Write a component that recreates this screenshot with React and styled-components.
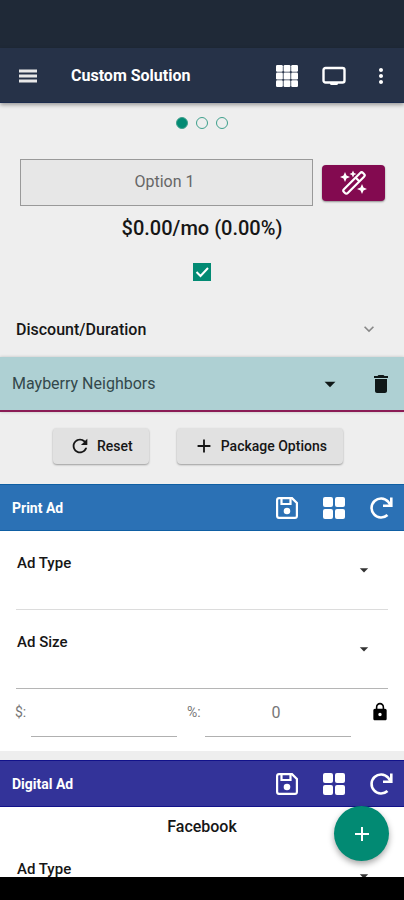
import { useState } from "react";
import styled, { createGlobalStyle } from "styled-components";
import {
    MdAdd,
    MdArrowDropDown,
    MdDelete,
    MdExpandMore,
    MdLock,
    MdMoreVert,
    MdRefresh,
} from "react-icons/md";

const GlobalStyle = createGlobalStyle`
    *{
        box-sizing: border-box;
    }
    body{
        margin: 0;
        background-color: #eeeeee;
        color: #161616;
        font-family: Roboto, "Liberation Sans", sans-serif;
    }
    button, input, select{
        font-family: inherit;
        color: inherit;
        margin: 0;
        padding: 0;
    }
`;

function MenuIcon(){
    return(
        <svg width="20" height="14" viewBox="0 0 20 14" fill="#e8e8e8">
            <rect x="1" y="0.5" width="18" height="3"/>
            <rect x="1" y="5.5" width="18" height="3"/>
            <rect x="1" y="10.5" width="18" height="3"/>
        </svg>
    );
}

function AppsIcon(){
    return(
        <svg width="22" height="22" viewBox="0 0 22 22" fill="currentColor">
            {[0, 7.6, 15.2].map((y) =>
                [0, 7.6, 15.2].map((x) => (
                    <rect key={`${x}-${y}`} x={x} y={y} width="6.8" height="6.8" rx="1.2"/>
                ))
            )}
        </svg>
    );
}

function MonitorIcon(){
    return(
        <svg width="24" height="20" viewBox="0 0 24 20">
            <rect x="1.5" y="2" width="21" height="14.5" rx="2" fill="none" stroke="currentColor" strokeWidth="2.4"/>
            <path d="M8 16h8v1.5a1.5 1.5 0 0 1-1.5 1.5h-5A1.5 1.5 0 0 1 8 17.5z" fill="currentColor"/>
        </svg>
    );
}

function WandIcon(){
    return(
        <svg width="28" height="26" viewBox="0 0 28 26">
            <g transform="rotate(-45 14 13)" fill="none" stroke="currentColor" strokeWidth="2.2">
                <rect x="0.5" y="10.3" width="27" height="5.4" rx="2"/>
                <path d="M19 10.5v5"/>
            </g>
            <g fill="currentColor">
                <path d="M5 2l1.5 3.5L10 7 6.500 8.500 5 12 3.500 8.500 0 7l3.500-1.500z"/>
                <path d="M13 0.500l1.100 2.400L16.500 4l-2.400 1.100L13 7.500l-1.100-2.400L9.500 4l2.400-1.100z"/>
                <path d="M22 14l1.500 3.500L27 19l-3.500 1.500L22 24l-1.500-3.500L17 19l3.500-1.500z"/>
            </g>
        </svg>
    );
}

function SaveIcon(){
    return(
        <svg width="22" height="22" viewBox="0 0 22 22" fill="none" stroke="currentColor" strokeWidth="2.2">
            <path d="M3 1.100h13l4.900 4.900v13a2 2 0 0 1-2 1.900H3a2 2 0 0 1-1.900-1.900V3A2 2 0 0 1 3 1.100z"/>
            <path d="M5.500 1.500V7h9V1.500"/>
            <circle cx="11" cy="14" r="3.300" fill="currentColor" stroke="none"/>
        </svg>
    );
}

function BlocksIcon(){
    return(
        <svg width="22" height="22" viewBox="0 0 22 22" fill="currentColor">
            <rect x="0" y="0" width="10" height="10" rx="2"/>
            <rect x="12" y="0" width="10" height="10" rx="2"/>
            <rect x="0" y="12" width="10" height="10" rx="2"/>
            <rect x="12" y="12" width="10" height="10" rx="2"/>
        </svg>
    );
}

function ReloadIcon(){
    return(
        <svg width="24" height="24" viewBox="0 0 24 24" fill="none" stroke="currentColor" strokeWidth="2.6">
            <path d="M18.500 19A9.500 9.500 0 1 1 19 5.500L21.500 9"/>
            <path d="M14 9.800h8.300V1.500"/>
        </svg>
    );
}

function AdHeader({ title, color, edge }){
    return(
        <SectionBar $color={color} $edge={edge}>
            <h2>{title}</h2>
            <IconButton aria-label={`Save ${title}`}><SaveIcon/></IconButton>
            <IconButton aria-label={`${title} layout`}><BlocksIcon/></IconButton>
            <IconButton aria-label={`Reset ${title}`}><ReloadIcon/></IconButton>
        </SectionBar>
    );
}

function AdField({ id, label, strong }){
    return(
        <Field $strong={strong}>
            <label htmlFor={id}>{label}</label>
            <select id={id} defaultValue="">
                <option value=""></option>
            </select>
            <MdArrowDropDown size={20}/>
        </Field>
    );
}

export default function App(){
    const [included, setIncluded] = useState(true);
    const [page, setPage] = useState(0);

    return(
        <Screen>
            <GlobalStyle/>
            <StatusBar/>
            <Toolbar>
                <IconButton $width={56} aria-label="Menu"><MenuIcon/></IconButton>
                <h1>Custom Solution</h1>
                <IconButton aria-label="Apps"><AppsIcon/></IconButton>
                <IconButton aria-label="Present"><MonitorIcon/></IconButton>
                <IconButton aria-label="More"><MdMoreVert size={24}/></IconButton>
            </Toolbar>

            <Main>
                <Dots>
                    {[0, 1, 2].map((n) => (
                        <Dot key={n} $active={n === page} aria-label={`Option ${n + 1}`} onClick={() => setPage(n)}/>
                    ))}
                </Dots>

                <OptionRow>
                    <OptionInput aria-label="Option name" defaultValue="Option 1"/>
                    <WandButton aria-label="Auto build"><WandIcon/></WandButton>
                </OptionRow>
                <Price>$0.00/mo (0.00%)</Price>
                <Include>
                    <input
                        type="checkbox"
                        aria-label="Include option"
                        checked={included}
                        onChange={(e) => setIncluded(e.target.checked)}
                    />
                    <svg width="18" height="18" viewBox="0 0 18 18" fill="none" stroke="#fff" strokeWidth="2">
                        <path d="M3.500 9l4 4 7.500-8"/>
                    </svg>
                </Include>

                <Discount>
                    Discount/Duration
                    <MdExpandMore size={20}/>
                </Discount>

                <Publication>
                    <PublicationSelect>
                        <select aria-label="Publication">
                            <option>Mayberry Neighbors</option>
                        </select>
                        <MdArrowDropDown size={26}/>
                    </PublicationSelect>
                    <IconButton aria-label="Delete publication"><MdDelete size={24}/></IconButton>
                </Publication>

                <Actions>
                    <ActionButton><MdRefresh size={22}/>Reset</ActionButton>
                    <ActionButton><MdAdd size={22}/>Package Options</ActionButton>
                </Actions>

                <AdHeader title="Print Ad" color="#2b71b5" edge="#0f5fa3"/>
                <Panel>
                    <AdField id="print-type" label="Ad Type"/>
                    <AdField id="print-size" label="Ad Size" strong/>
                    <Amounts>
                        <label htmlFor="amount">$:</label>
                        <input id="amount" type="text"/>
                        <label htmlFor="percent">%:</label>
                        <input id="percent" type="text" defaultValue="0"/>
                        <LockButton aria-label="Lock price"><MdLock size={20}/></LockButton>
                    </Amounts>
                </Panel>

                <AdHeader title="Digital Ad" color="#333399" edge="#12128a"/>
                <Panel>
                    <Channel>Facebook</Channel>
                    <AdField id="digital-type" label="Ad Type"/>
                </Panel>
            </Main>

            <NavBar>
                <Fab aria-label="Add"><MdAdd size={24}/></Fab>
            </NavBar>
        </Screen>
    );
}

const Screen = styled.div`
    height: 100vh;
    display: flex;
    flex-direction: column;
`;

const StatusBar = styled.div`
    height: 48px;
    flex: none;
    background-color: #1f2937;
`;

const Toolbar = styled.header`
    height: 55px;
    flex: none;
    display: flex;
    align-items: center;
    padding-top: 1px;
    background-color: #263248;
    border-bottom: 1px solid #1b2b4d;
    box-shadow: 0 2px 4px rgba(0, 0, 0, 0.35);
    color: white;
    z-index: 1;

    h1{
        flex: 1;
        margin: 0;
        padding-left: 15px;
        font-size: 16px;
        font-weight: 700;
    }
`;

const IconButton = styled.button`
    width: ${(props) => props.$width || 47}px;
    height: 47px;
    flex: none;
    display: flex;
    align-items: center;
    justify-content: center;
    border: none;
    background: none;
`;

const Main = styled.main`
    flex: 1;
    min-height: 0;
    overflow-y: auto;
    scrollbar-width: none;
`;

const Dots = styled.div`
    display: flex;
    justify-content: center;
    gap: 8px;
    padding: 14px 0 30px;
`;

const Dot = styled.button`
    width: 12px;
    height: 12px;
    border: 1px solid #3fa08c;
    border-radius: 50%;
    background-color: ${(props) => (props.$active ? "#028a73" : "transparent")};
`;

const OptionRow = styled.div`
    display: flex;
    align-items: center;
    gap: 9px;
    padding: 0 19px 0 20px;
`;

const OptionInput = styled.input`
    flex: 1;
    min-width: 0;
    height: 47px;
    border: 1px solid #999999;
    border-radius: 0;
    background-color: #e7e7e7;
    color: #666666;
    font-size: 16px;
    text-align: center;

    && {
        padding: 0 4px 3px 0;
    }
`;

const WandButton = styled.button`
    width: 63px;
    height: 36px;
    display: flex;
    align-items: center;
    justify-content: center;
    border: none;
    border-radius: 4px;
    background-color: #830a50;
    box-shadow: 0 1px 2px rgba(0, 0, 0, 0.4);
    color: white;
`;

const Price = styled.p`
    margin: 10px 0 0;
    font-size: 20px;
    font-weight: 500;
    line-height: 24px;
    text-align: center;
`;

const Include = styled.label`
    display: grid;
    justify-content: center;
    padding: 23px 0 24px;

    input, svg{
        grid-area: 1 / 1;
    }
    input{
        appearance: none;
        width: 18px;
        height: 18px;
        border: 2px solid #028a73;
    }
    input:checked{
        background-color: #028a73;
    }
    svg{
        pointer-events: none;
    }
    input:not(:checked) + svg{
        visibility: hidden;
    }
`;

const Discount = styled.button`
    width: 100%;
    height: 52px;
    display: flex;
    align-items: center;
    justify-content: space-between;
    border: none;
    background: none;
    font-size: 16px;
    font-weight: 500;

    && {
        padding: 0 25px 4px 16px;
    }
    svg{
        color: #888888;
    }
`;

const Publication = styled.div`
    height: 55px;
    display: flex;
    align-items: center;
    background-color: #aed0d3;
    border-bottom: 2px solid #8a1c55;
    box-shadow: 0 0 3px rgba(0, 0, 0, 0.2);
    color: #101818;
`;

const PublicationSelect = styled.div`
    flex: 1;
    display: grid;
    align-items: center;

    select, svg{
        grid-area: 1 / 1;
    }
    select{
        appearance: none;
        height: 47px;
        padding-left: 12px;
        border: none;
        background: none;
        color: #33484b;
        font-size: 16px;
    }
    svg{
        justify-self: end;
        margin-right: 14px;
        pointer-events: none;
    }
`;

const Actions = styled.div`
    display: flex;
    justify-content: center;
    gap: 28px;
    padding: 16px 8px 20px 0;
`;

const ActionButton = styled.button`
    height: 36px;
    display: flex;
    align-items: center;
    gap: 6px;
    border: none;
    border-radius: 4px;
    background-color: #e1e1e1;
    box-shadow: 0 1px 2px rgba(0, 0, 0, 0.35);
    font-size: 14px;
    font-weight: 500;

    && {
        padding: 0 16px;
    }
`;

const SectionBar = styled.div`
    height: 47px;
    display: flex;
    align-items: center;
    background-color: ${(props) => props.$color};
    border-top: 1px solid ${(props) => props.$edge};
    border-bottom: 1px solid ${(props) => props.$edge};
    color: white;

    h2{
        flex: 1;
        margin: 0;
        padding-left: 12px;
        font-size: 14px;
        font-weight: 700;
    }
`;

const Panel = styled.section`
    margin-bottom: 9px;
    background-color: white;
`;

const Field = styled.div`
    height: 79px;
    display: grid;
    margin: 0 16px;
    border-bottom: 1px solid ${(props) => (props.$strong ? "#b5b5b5" : "#dcdcdc")};

    label, select, svg{
        grid-area: 1 / 1;
    }
    label{
        padding: 22px 0 0 1px;
        font-size: 15px;
        font-weight: 500;
        line-height: 20px;
    }
    select{
        appearance: none;
        border: none;
        background: none;
    }
    svg{
        align-self: center;
        justify-self: end;
        margin-right: 14px;
        color: #333333;
        pointer-events: none;
    }
`;

const Amounts = styled.div`
    display: flex;
    padding: 0 13px 14px 15px;
    color: #777777;
    font-size: 14px;
    line-height: 46px;

    label{
        width: 16px;
    }
    input{
        flex: 1;
        min-width: 0;
        height: 48px;
        padding-right: 4px;
        border: none;
        border-bottom: 1px solid #b0b0b0;
        border-radius: 0;
        background: none;
        font-size: 16px;
        text-align: center;
    }
    input + label{
        width: 18px;
        margin-left: 10px;
    }
`;

const LockButton = styled.button`
    width: 22px;
    height: 46px;
    display: flex;
    align-items: center;
    justify-content: center;
    margin-left: 18px;
    border: none;
    background: none;

    && {
        color: #000000;
    }
`;

const Channel = styled.h3`
    margin: 0;
    padding-top: 10px;
    font-size: 16px;
    font-weight: 500;
    line-height: 20px;
    text-align: center;
`;

const NavBar = styled.footer`
    position: relative;
    height: 23px;
    flex: none;
    background-color: #000000;
`;

const Fab = styled.button`
    position: absolute;
    right: 15px;
    bottom: 39px;
    width: 55px;
    height: 55px;
    display: flex;
    align-items: center;
    justify-content: center;
    border: none;
    border-radius: 50%;
    background-color: #028a73;
    box-shadow: 0 3px 6px rgba(0, 0, 0, 0.35);

    && {
        color: white;
    }
`;
